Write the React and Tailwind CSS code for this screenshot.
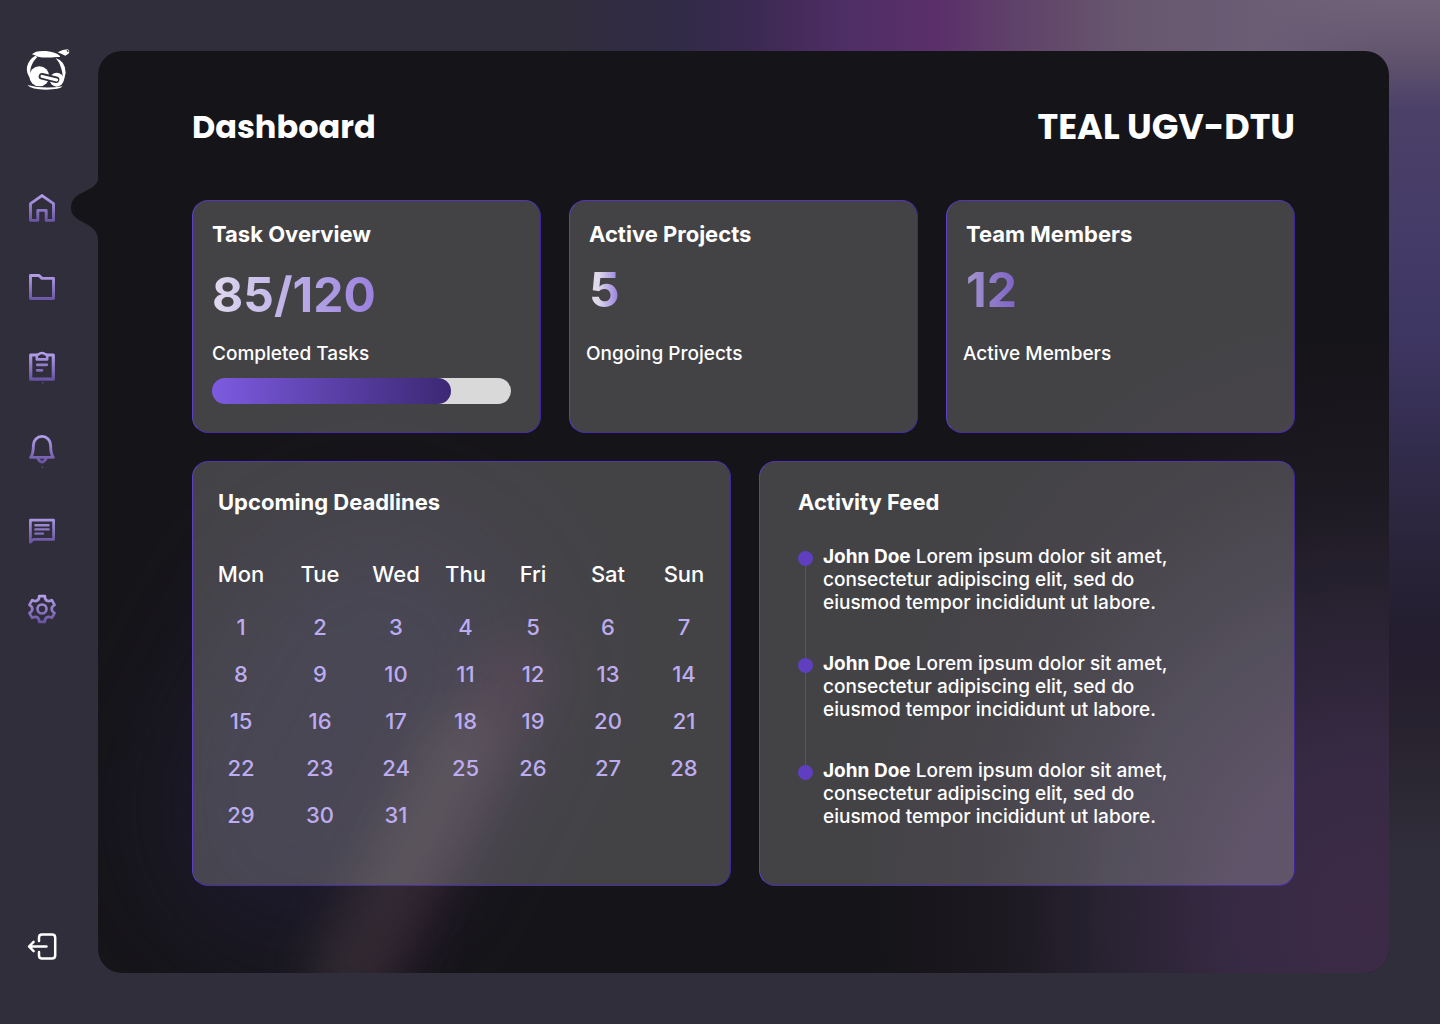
import React from "react";

const GRAD = "url(#icon-fade)";

const gearPath = (() => {
  const point = (r, deg) => {
    const a = ((deg - 90) * Math.PI) / 180;
    return `${(16 + r * Math.cos(a)).toFixed(2)} ${(16 + r * Math.sin(a)).toFixed(2)}`;
  };
  let d = "";
  for (let i = 0; i < 6; i += 1) {
    const c = i * 60;
    d += `${i === 0 ? "M" : "L"}${point(13.2, c - 12)}L${point(13.2, c + 12)}`;
    d += `L${point(10.8, c + 17)}Q${point(8.8, c + 30)} ${point(10.8, c + 43)}`;
  }
  return `${d}Z`;
})();

function Icon({ children }) {
  return (
    <svg viewBox="0 0 32 32" className="size-8 overflow-visible" fill="none" strokeWidth="2.9" strokeLinecap="round" strokeLinejoin="round" aria-hidden="true">
      <defs>
        <linearGradient id="icon-fade" gradientUnits="userSpaceOnUse" x1="16" y1="2" x2="16" y2="31">
          <stop offset="0" stopColor="#b7a2ee" />
          <stop offset="1" stopColor="#65509f" />
        </linearGradient>
      </defs>
      {children}
    </svg>
  );
}

const navGroups = [
  {
    spacing: "gap-[47px]",
    items: [
      {
        name: "Home",
        art: <path stroke={GRAD} d="M4.5 11.6 16 3.6 27.5 11.6V28.4H20.2V18.4H11.8V28.4H4.5Z" />,
      },
      {
        name: "Projects",
        art: <path stroke={GRAD} d="M4.5 4.5H13L16 7.4H27.5V27.5H4.5Z" />,
      },
      {
        name: "Tasks",
        art: (
          <>
            <path stroke={GRAD} strokeWidth="3.2" d="M10.6 5H4.7V29.2H27.3V5H21.4" />
            <path stroke={GRAD} strokeWidth="2.6" d="M10.8 5V9.4H21.2V5M12.4 4.4Q16 1.6 19.6 4.4" />
            <path stroke={GRAD} strokeWidth="2.7" d="M11.2 14.8H20.8M11.2 20.3H16" />
            <circle cx="16.7" cy="32.6" r="0.8" fill="#65509f" />
          </>
        ),
      },
    ],
  },
  {
    spacing: "gap-12",
    items: [
      {
        name: "Notifications",
        art: (
          <>
            <path stroke={GRAD} d="M4.6 24.4C7.4 21.2 7.4 17 7.4 12A8.6 8.6 0 0 1 24.6 12C24.6 17 24.6 21.2 27.4 24.4Z" />
            <path stroke={GRAD} d="M12 25.8Q16 32.4 20 25.8" />
            <circle cx="16.4" cy="34.2" r="0.8" fill="#65509f" />
          </>
        ),
      },
      {
        name: "Messages",
        art: (
          <>
            <path stroke={GRAD} strokeWidth="2.7" d="M4.4 29.4V7.2H27.6V26.4H7.4Z" />
            <path stroke={GRAD} strokeWidth="2.4" d="M9.4 12.2H22.6M9.4 16.4H22.6M9.4 20.6H17" />
          </>
        ),
      },
      {
        name: "Settings",
        art: (
          <>
            <path stroke={GRAD} strokeWidth="2.7" d={gearPath} />
            <circle cx="16" cy="16" r="4.5" stroke={GRAD} strokeWidth="2.7" />
          </>
        ),
      },
    ],
  },
];

function Logo() {
  return (
    <svg viewBox="48 24 132 126" className="h-[42px] w-11" role="img" aria-label="UGV-DTU">
      <g fill="#fff">
        <path d="M66 43Q76 31 108 33Q138 36 149 47Q154 52 140 51Q104 55 84 50Q74 46 66 43Z" />
        <path d="M143 37 158 30 174 28Q180 33 177 40L166 47 157 43Z" />
        <path d="M82 51Q68 64 62 84 58 98 62 116 48 100 51 80 56 58 76 47Z" />
        <path d="M137 54Q167 64 167 98 164 118 157 130 160 104 154 86 150 68 137 54Z" />
        <circle cx="88" cy="109" r="30" />
        <circle cx="140" cy="119" r="21" />
        <path d="M52 135Q100 148 158 139Q150 149 108 149 64 149 52 135Z" />
      </g>
      <path d="M171 31 175 35" stroke="#312e3b" strokeWidth="4" />
      <path d="M96 109 138 119" stroke="#312e3b" strokeWidth="20" strokeLinecap="round" />
      <path d="M96 109 140 120" stroke="#fff" strokeWidth="9" strokeLinecap="round" />
    </svg>
  );
}

function Sidebar() {
  return (
    <aside className="flex w-[98px] shrink-0 flex-col pt-12 pb-12 pl-[26px]">
      <Logo />
      <nav aria-label="Main" className="mt-[102px] flex flex-col gap-[51px]">
        {navGroups.map((group) => (
          <div key={group.spacing} className={`flex flex-col ${group.spacing}`}>
            {group.items.map((item) => (
              <button key={item.name} type="button" aria-label={item.name} className="size-8">
                <Icon>{item.art}</Icon>
              </button>
            ))}
          </div>
        ))}
      </nav>
      <button type="button" aria-label="Log out" className="mt-auto mb-[14px] size-8">
        <svg viewBox="0 0 32 32" className="size-8" fill="none" stroke="#fff" strokeWidth="2.5" strokeLinecap="round" strokeLinejoin="round" aria-hidden="true">
          <path d="M13 11V7.5Q13 4.5 16 4.5H26Q29.2 4.5 29.2 7.5V25.5Q29.2 28.5 26 28.5H16Q13 28.5 13 25.5V22" />
          <path d="M20.5 16.5H3M7.6 11.8 3 16.5 7.6 21.2" />
        </svg>
      </button>
    </aside>
  );
}

function Card({ className, children }) {
  return (
    <section className={`rounded-2xl border border-t-[#5335b4] border-r-[#40259b] border-b-[#4a2ea8] border-l-[#5d3fc6] bg-white/20 ${className}`}>
      {children}
    </section>
  );
}

function CardTitle({ children }) {
  return <h2 className="text-[22px] leading-7 font-bold">{children}</h2>;
}

const weekdays = ["Mon", "Tue", "Wed", "Thu", "Fri", "Sat", "Sun"];
const weeks = [0, 1, 2, 3, 4].map((w) =>
  weekdays.map((_, d) => w * 7 + d + 1).map((n) => (n <= 31 ? n : ""))
);

function Calendar() {
  return (
    <table className="mt-[29px] w-full table-fixed text-[22px] leading-7 font-medium">
      <colgroup>
        <col className="w-[80px]" />
        <col className="w-[78px]" />
        <col className="w-[74px]" />
        <col className="w-[65px]" />
        <col className="w-[70px]" />
        <col className="w-[80px]" />
        <col className="w-[72px]" />
      </colgroup>
      <thead>
        <tr className="h-[58px]">
          {weekdays.map((day) => (
            <th key={day} scope="col" className="p-0 text-center font-medium">{day}</th>
          ))}
        </tr>
      </thead>
      <tbody>
        {weeks.map((week, i) => (
          <tr key={i} className="h-[47px]">
            {week.map((n, d) => (
              <td key={d} className="p-0 text-center text-[#bdadf0]">{n}</td>
            ))}
          </tr>
        ))}
      </tbody>
    </table>
  );
}

function Feed() {
  return (
    <ol className="mt-[29px]">
      {[0, 1, 2].map((i) => (
        <li key={i} className="flex gap-[10px]">
          <div className="flex w-[15px] flex-col items-center pt-[6px]">
            <span className="size-[15px] shrink-0 rounded-full bg-[#5f3fbf]" />
            {i < 2 && <span className="-mb-[6px] w-px grow bg-[#5f3fbf]" />}
          </div>
          <p className={`max-w-[360px] text-[19px] leading-[23px] font-medium ${i < 2 ? "pb-[38px]" : ""}`}>
            <strong className="font-bold">John Doe</strong> Lorem ipsum dolor sit amet, consectetur adipiscing elit, sed do eiusmod tempor incididunt ut labore.
          </p>
        </li>
      ))}
    </ol>
  );
}

export default function App() {
  return (
    <div className="flex min-h-screen bg-[#312e3b] bg-[linear-gradient(90deg,#312e3b_38%,#312b48_47%,#3a2950_52%,#502e66_59%,#5a2f6a_65%,#5f4069_70%,#67566e_78%,#6a5d74_87%,rgba(106,93,116,0)_96%),linear-gradient(180deg,#706379_0px,#64566f_50px,#4b4168_110px,#443b68_240px,#3e3662_340px,#322c4c_450px,#292338_560px,#231d2f_640px,#28232f_740px,#312e3b_860px)] bg-[length:100%_80px,200px_100%] bg-[position:left_top,right_top] bg-no-repeat font-['Inter',sans-serif] text-white">
      <Sidebar />
      <main className="relative my-[51px] mr-[51px] min-w-0 grow rounded-3xl bg-[#151418]">
        <svg viewBox="0 0 28 66" className="absolute top-[123px] -left-[27px] h-[66px] w-7" fill="#151418" aria-hidden="true">
          <path d="M28 0C28 21 0 14 0 34C0 50 27 47 27 66H28Z" />
        </svg>
        <div className="absolute inset-0 overflow-hidden rounded-3xl" aria-hidden="true">
          <div className="absolute inset-0 bg-[radial-gradient(ellipse_500px_600px_at_98%_94%,#3d2b46_0%,#382a44_25%,#292333_50%,#1b181f_75%,transparent_100%)]" />
          <div className="absolute bottom-0 left-[90px] h-[460px] w-[300px] rotate-[28deg] rounded-full bg-[#231e3e]/50 blur-[60px]" />
          <div className="absolute -bottom-[60px] left-[310px] h-[410px] w-[60px] rotate-[27deg] rounded-full bg-[#45233f]/45 blur-[26px]" />
          <div className="absolute -bottom-[60px] left-[270px] h-[340px] w-[70px] rotate-[27deg] rounded-full bg-[#3a3739]/55 blur-[24px]" />
        </div>
        <div className="relative px-[94px] pt-[54px] pb-[87px]">
          <header className="flex items-center justify-between font-['Poppins','Inter',sans-serif] font-bold">
            <h1 className="text-[32px] leading-[44px]">Dashboard</h1>
            <p className="text-[35px] leading-[44px]">TEAL UGV-DTU</p>
          </header>
          <div className="mt-[51px] grid grid-cols-3 gap-7">
            <Card className="h-[233px] px-[19px] pt-[19px]">
              <CardTitle>Task Overview</CardTitle>
              <p className="mt-[18px] w-fit bg-linear-to-r from-[#e0daee] to-[#9a80de] bg-clip-text text-[48px] leading-[58px] font-bold text-transparent">85/120</p>
              <p id="completed" className="mt-[18px] text-[19px] leading-[23px] font-medium">Completed Tasks</p>
              <div role="progressbar" aria-labelledby="completed" aria-valuemin={0} aria-valuemax={120} aria-valuenow={85} className="mt-[13px] mr-[10px] h-[26px] rounded-full bg-[linear-gradient(90deg,transparent_20px,#d9d9d9_20px)]">
                <div className="h-full w-4/5 rounded-full bg-linear-to-r from-[#7d5be0] to-[#3c2874]" />
              </div>
            </Card>
            <Card className="h-[233px] px-[16px] pt-[19px]">
              <div className="pl-[3px]">
                <CardTitle>Active Projects</CardTitle>
                <p className="mt-[13px] w-fit bg-linear-to-r from-[#dfd9ea] from-30% to-[#9478dc] bg-clip-text text-[48px] leading-[58px] font-bold text-transparent">5</p>
              </div>
              <p className="mt-[23px] text-[19px] leading-[23px] font-medium">Ongoing Projects</p>
            </Card>
            <Card className="h-[233px] px-[16px] pt-[19px]">
              <div className="pl-[3px]">
                <CardTitle>Team Members</CardTitle>
                <p className="mt-[13px] w-fit bg-linear-to-r from-[#a594cf] to-[#7d63c4] bg-clip-text text-[48px] leading-[58px] font-bold text-transparent">12</p>
              </div>
              <p className="mt-[23px] text-[19px] leading-[23px] font-medium">Active Members</p>
            </Card>
          </div>
          <div className="mt-7 grid grid-cols-[539fr_536fr] gap-7">
            <Card className="h-[425px] pt-[26px] pr-[10px] pl-[8px]">
              <div className="pl-[17px]">
                <CardTitle>Upcoming Deadlines</CardTitle>
              </div>
              <Calendar />
            </Card>
            <Card className="h-[425px] px-[38px] pt-[26px]">
              <CardTitle>Activity Feed</CardTitle>
              <Feed />
            </Card>
          </div>
        </div>
      </main>
    </div>
  );
}
